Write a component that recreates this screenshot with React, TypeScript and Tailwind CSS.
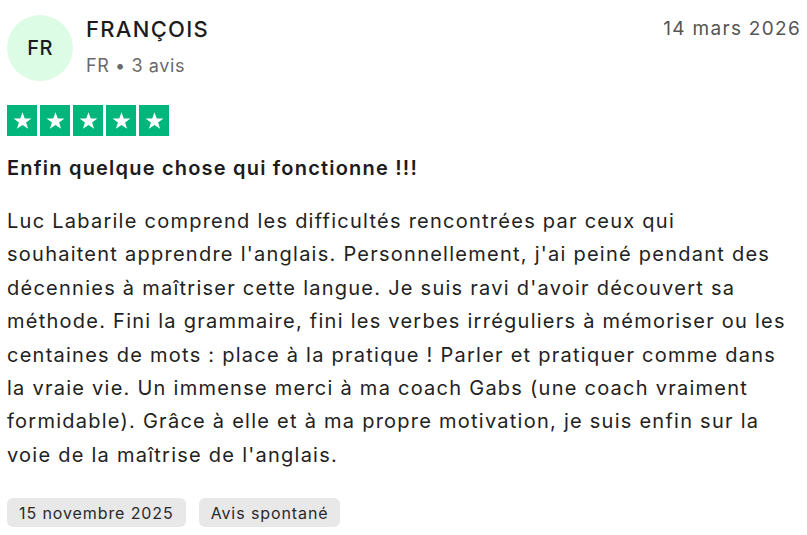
const lines = [
  "Luc Labarile comprend les difficultés rencontrées par ceux qui",
  "souhaitent apprendre l'anglais. Personnellement, j'ai peiné pendant des",
  "décennies à maîtriser cette langue. Je suis ravi d'avoir découvert sa",
  "méthode. Fini la grammaire, fini les verbes irréguliers à mémoriser ou les",
  "centaines de mots : place à la pratique ! Parler et pratiquer comme dans",
  "la vraie vie. Un immense merci à ma coach Gabs (une coach vraiment",
  "formidable). Grâce à elle et à ma propre motivation, je suis enfin sur la",
  "voie de la maîtrise de l'anglais.",
]

function Star() {
  return (
    <div className="w-[30px] h-[31px] bg-[#00b67a] flex items-center justify-center">
      <svg viewBox="0 0 24 24" className="w-[21px] h-[21px]" fill="white">
        <path d="M12 2.5l2.6 7.2h7.6l-6.1 4.5 2.3 7.3L12 17l-6.4 4.5 2.3-7.3-6.1-4.5h7.6z" />
      </svg>
    </div>
  )
}

export default function App() {
  return (
    <div className="bg-white w-[807px] h-[535px] px-[7px] pt-[15px] font-['Inter',sans-serif] text-[#1c1c1c]">
      {/* Header */}
      <div className="flex items-start">
        <div className="w-[66px] h-[66px] rounded-full bg-[#dcfce5] flex items-center justify-center text-[20px] font-medium tracking-[0.5px] shrink-0">
          FR
        </div>
        <div className="ml-[13px] flex-1">
          <div className="text-[22px] font-medium leading-[28px] tracking-[1.3px]">FRANÇOIS</div>
          <div className="text-[18px] text-[#696a6a] mt-[9px] tracking-[0.6px]">FR • 3 avis</div>
        </div>
        <div className="text-[19px] text-[#555] leading-[28px] tracking-[1.3px] mr-[-1px]">14 mars 2026</div>
      </div>

      {/* Stars */}
      <div className="flex gap-[3px] mt-[24px]">
        {[0, 1, 2, 3, 4].map((i) => (
          <Star key={i} />
        ))}
      </div>

      {/* Title */}
      <h2 className="text-[20px] font-semibold mt-[18px] leading-[28px] tracking-[1.2px]">
        Enfin quelque chose qui fonctionne !!!
      </h2>

      {/* Body */}
      <p className="text-[20px] leading-[33.4px] mt-[23px] tracking-[1.25px] text-[#222]">
        {lines.map((l) => (
          <span key={l} className="block whitespace-nowrap">{l}</span>
        ))}
      </p>

      {/* Tags */}
      <div className="flex gap-[13px] mt-[26px]">
        <span className="bg-[#e8e8e8] rounded-[6px] px-[12px] h-[29px] flex items-center text-[16px] tracking-[0.9px] text-[#2a2a2a]">
          15 novembre 2025
        </span>
        <span className="bg-[#e8e8e8] rounded-[6px] px-[12px] h-[29px] flex items-center text-[16px] tracking-[0.9px] text-[#2a2a2a]">
          Avis spontané
        </span>
      </div>
    </div>
  )
}
